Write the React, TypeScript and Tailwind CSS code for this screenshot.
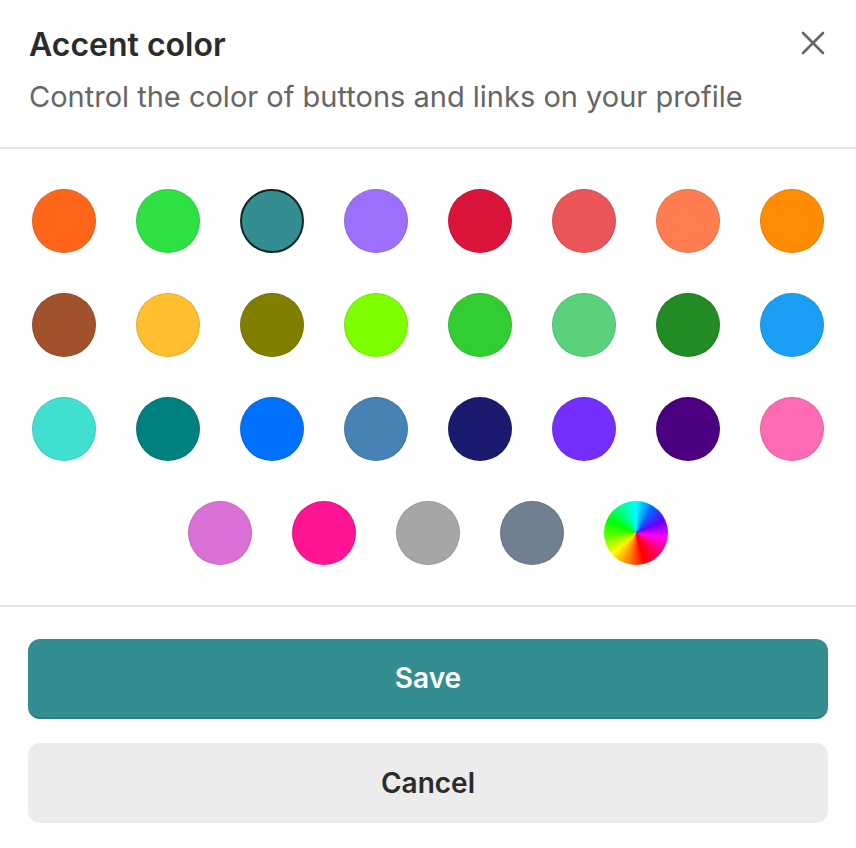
import React from "react";

const colors: string[] = [
  "#FF6619", "#2FE044", "#348E91", "#9D70FC", "#DB143C", "#EA5657", "#FF7D50", "#FF8C02",
  "#A0522D", "#FFBF2E", "#807F00", "#7DFF00", "#32CD32", "#5CD17C", "#238B23", "#1B9FF5",
  "#40E0D0", "#018080", "#0071FE", "#4682B4", "#1A1A6F", "#742FFE", "#4B0080", "#FF6AB5",
  "#DA71D6", "#FF1493", "#A6A6A6", "#708090",
];

export default function App() {
  return (
    <div
      className="w-[856px] h-[848px] bg-white overflow-hidden"
      style={{ fontFamily: "Inter, 'Liberation Sans', sans-serif" }}
    >
      <div className="relative px-[29px] pt-[26px] pb-[33px]">
        <h1 className="text-[32px] leading-[38px] font-semibold text-[#2b2b2b] tracking-[0px]">
          Accent color
        </h1>
        <p className="mt-[16px] text-[29px] leading-[34px] text-[#666666]">
          Control the color of buttons and links on your profile
        </p>
        <button className="absolute right-[30px] top-[30px] w-[26px] h-[26px] flex items-center justify-center">
          <svg width="26" height="26" viewBox="0 0 26 26" fill="none">
            <path d="M3 3 L23 23 M23 3 L3 23" stroke="#666" strokeWidth="2.6" strokeLinecap="round" />
          </svg>
        </button>
      </div>
      <div className="h-[2px] bg-[#e6e6e6]" />
      <div className="px-8 py-10 flex flex-wrap justify-center gap-10">
        {colors.map((c, i) => (
          <div
            key={i}
            className={
              i === 2
                ? "w-16 h-16 rounded-full border-2 border-[#0f2526]"
                : "w-16 h-16 rounded-full border border-black/10"
            }
            style={{ backgroundColor: c }}
          />
        ))}
        <div
          className="w-16 h-16 rounded-full"
          style={{
            background:
              "conic-gradient(from 0deg, #00ffff, #0066ff, #6600ff, #ff00ff, #ff0066, #ff0000, #ff8800, #ffff00, #66ff00, #00ff00, #00ff88, #00ffff)",
          }}
        />
      </div>
      <div className="h-[2px] bg-[#e6e6e6]" />
      <div className="px-7 pt-[32px] flex flex-col gap-[24px]">
        <button className="h-[80px] rounded-[12px] bg-[#348e91] border-b-2 border-[#2c7d80] text-white text-[28px] font-semibold">
          Save
        </button>
        <button className="h-[80px] rounded-[12px] bg-[#ececec] text-[#2b2b2b] text-[28px] font-semibold">
          Cancel
        </button>
      </div>
    </div>
  );
}
